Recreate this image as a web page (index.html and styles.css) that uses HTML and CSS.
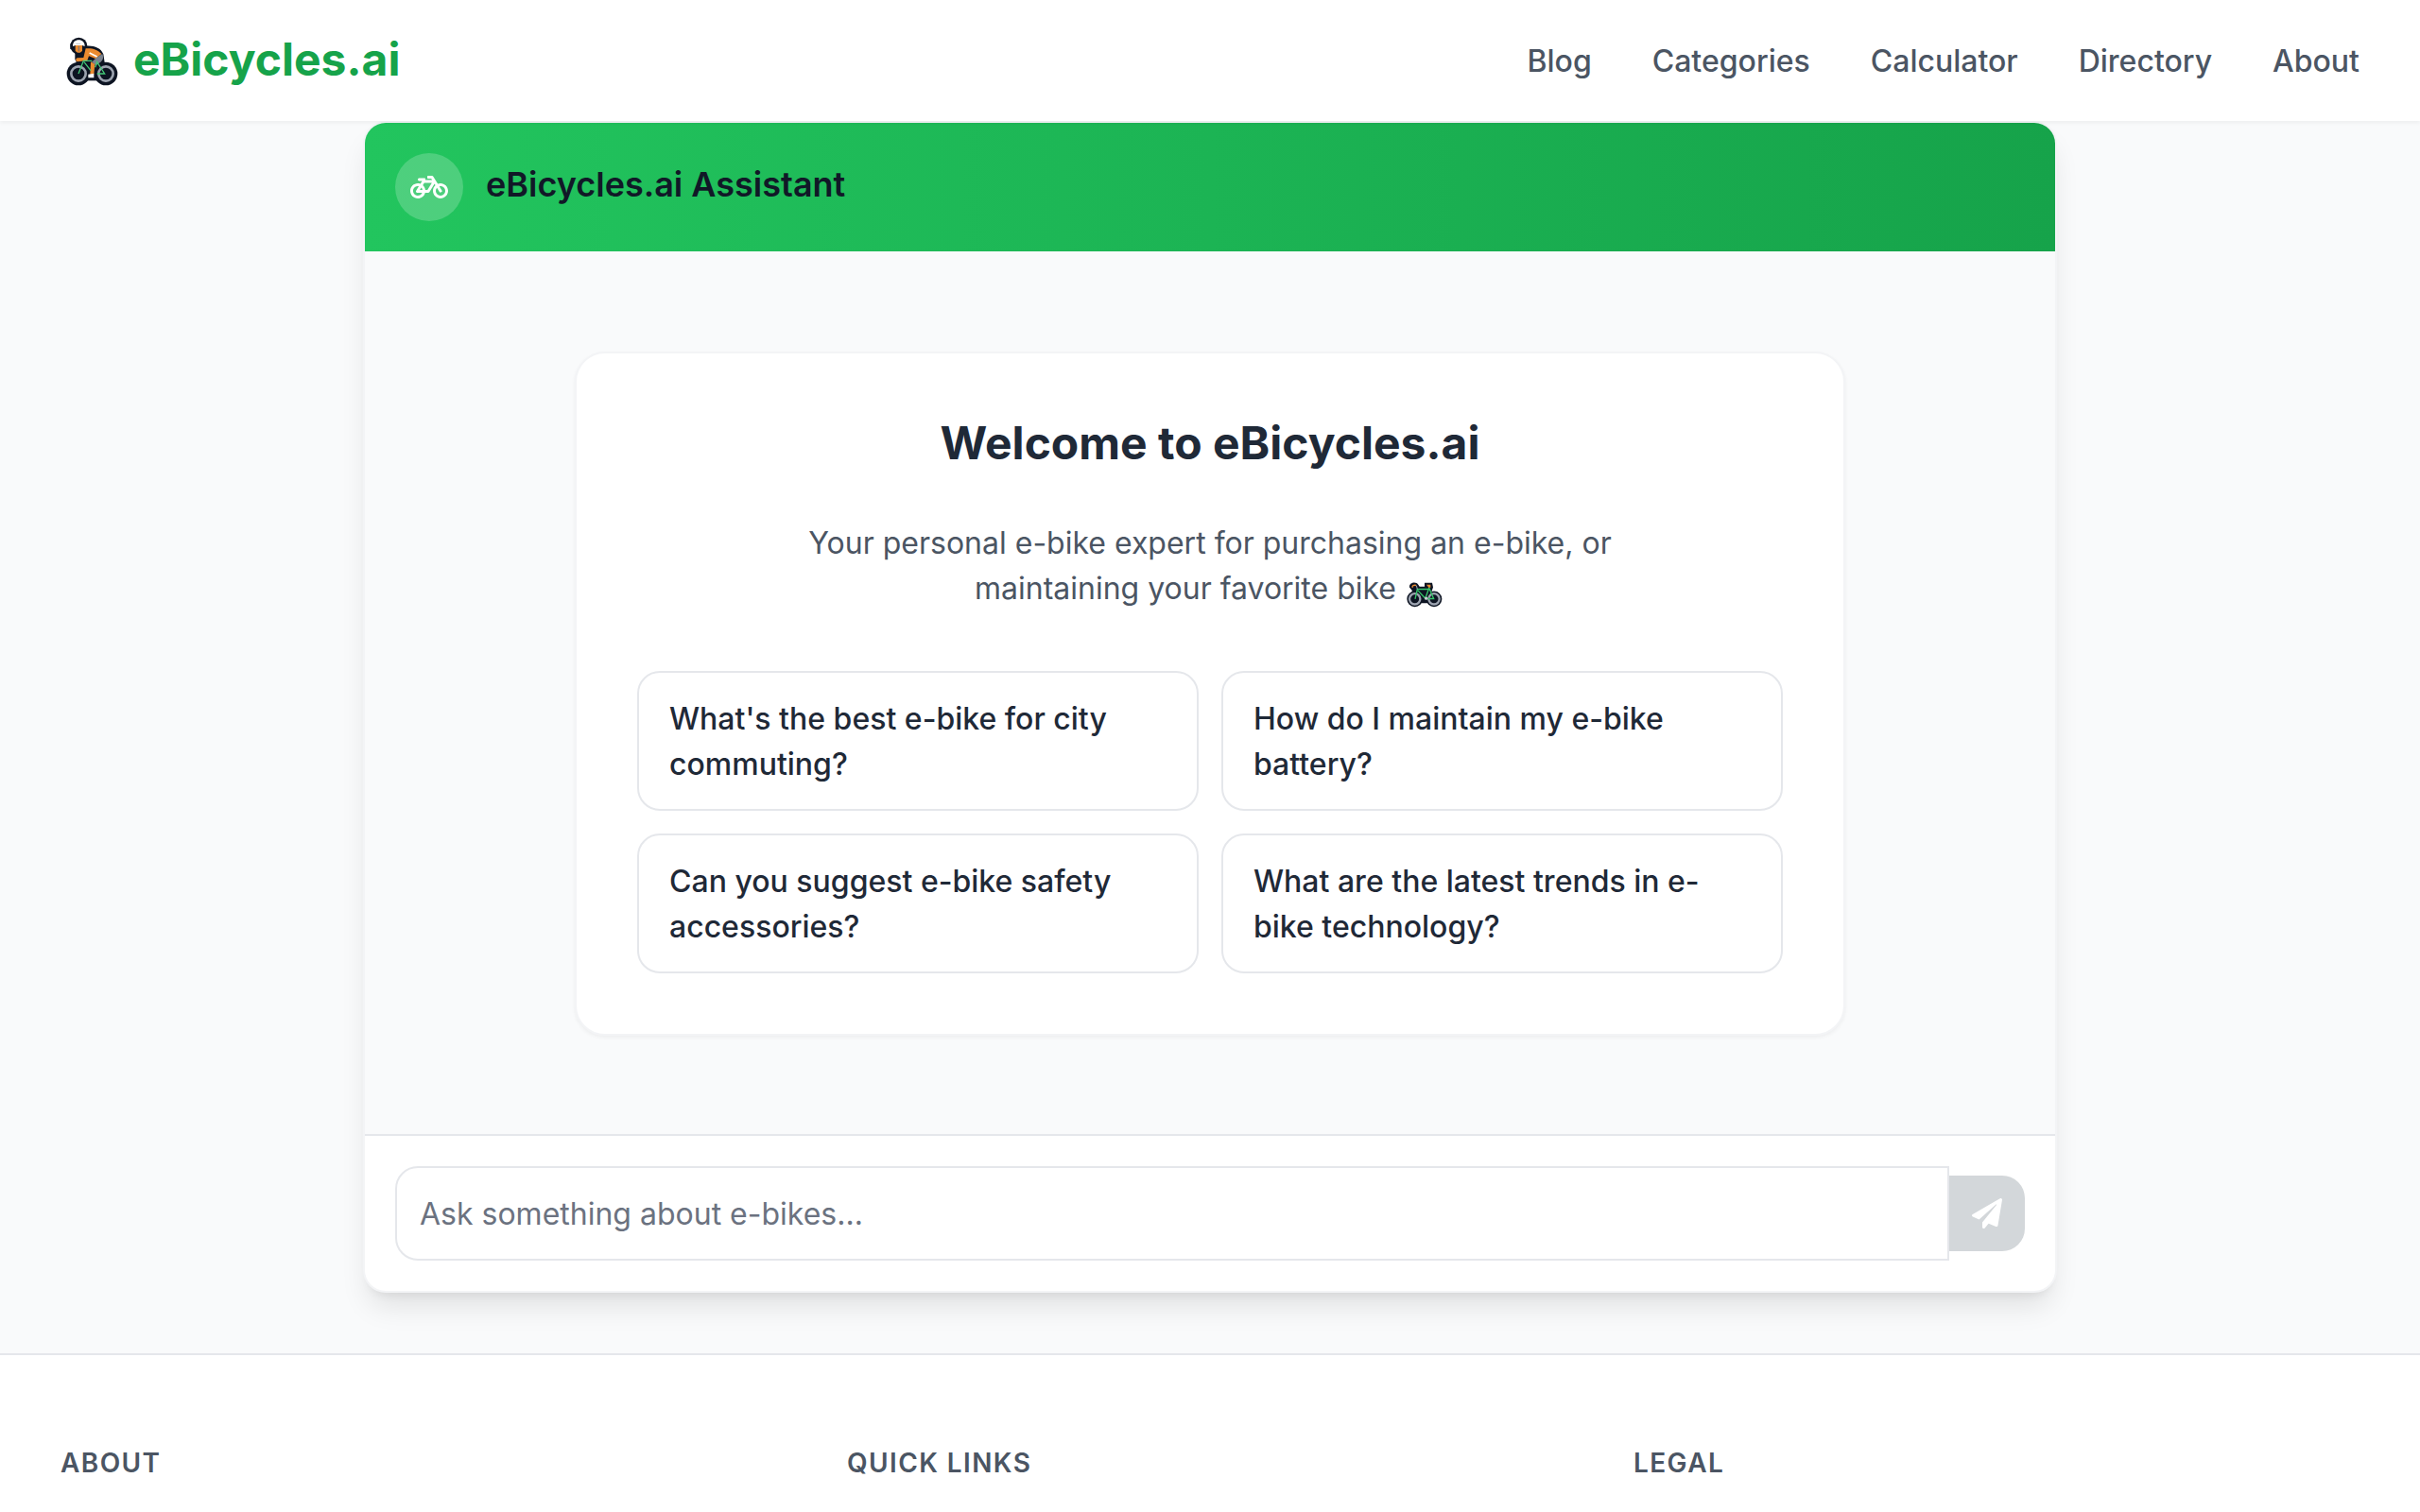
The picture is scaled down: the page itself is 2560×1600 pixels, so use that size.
FILE: index.html
```html
<!doctype html>
<html lang="en">
    <head>
        <meta charset="UTF-8" />
        <meta name="viewport" content="width=device-width, initial-scale=1.0" />
        <title>eBicycles.ai</title>
        <link rel="stylesheet" href="styles.css">
    </head>
    <body>
        <nav class="navbar">
            <a class="logo" href="#">
                <svg class="logo-icon" viewBox="16 13 168 159" aria-hidden="true">
                    <g fill="#0d1422">
                        <circle cx="55" cy="130" r="37" />
                        <circle cx="142" cy="130" r="37" />
                        <circle cx="56" cy="42" r="27" />
                        <path d="M29 34h8v18h-8zM44 62l28-4 8-16c24-2 46 6 54 26l4 26 4 50H90L50 98l-6-14z" />
                        <path d="M66 128h64v24H66z" />
                    </g>
                    <g fill="none" stroke="#9ca3af" stroke-width="8">
                        <circle cx="55" cy="130" r="23" />
                        <circle cx="142" cy="130" r="23" />
                    </g>
                    <path d="M45 40h22v18l-7 5h-8l-7-5z" fill="#ea8a2f" />
                    <path d="M56 42v17" stroke="#6b7280" stroke-width="3" />
                    <path d="M37 43c0-14 8-20 19-20s19 7 19 20l-8-3H45z" fill="#fff" />
                    <path d="M47 35h15" stroke="#c5cad1" stroke-width="3" />
                    <path d="M78 50c20-2 38 3 50 17l-18 16-22-9-5 14-31 4c-7 0-7-12 0-12l19-1z" fill="#ea8a2f" />
                    <path d="M90 64l24 12" stroke="#fff" stroke-width="5" />
                    <path d="M112 79l19-12c5 13 1 21-8 28l-13 9-13-11z" fill="#7b828d" />
                    <path d="M94 92l13 8-3 32H92z" fill="#ea8a2f" />
                    <path d="M86 132l18-3v14H86z" fill="#fff" />
                    <path d="M55 130l16-41h27M73 93l21 27M112 90l26 40h-24m-6-20l6-16" fill="none" stroke="#43c777" stroke-width="4" />
                </svg>
                <span>eBicycles.ai</span>
            </a>
            <div class="nav-links">
                <a href="#">Blog</a>
                <a href="#">Categories</a>
                <a href="#">Calculator</a>
                <a href="#">Directory</a>
                <a href="#">About</a>
            </div>
        </nav>

        <main class="chat-container">
            <div class="chat-header">
                <div class="avatar">
                    <svg class="avatar-icon" viewBox="0 0 640 512" aria-hidden="true">
                        <path fill="currentColor" d="M512.509 192.001c-16.373-.064-32.03 2.955-46.436 8.495l-77.68-125.153A24 24 0 0 0 368.001 64h-64c-8.837 0-16 7.163-16 16v16c0 8.837 7.163 16 16 16h50.649l14.896 24H256.002v-16c0-8.837-7.163-16-16-16h-87.459c-13.441 0-24.777 10.999-24.536 24.437.232 13.044 10.876 23.563 23.995 23.563h48.726l-29.417 47.52c-13.433-4.83-27.904-7.483-42.992-7.52C58.094 191.83.412 249.012.002 319.236-.413 390.279 57.055 448 128.002 448c59.642 0 109.758-40.793 123.967-96h52.033a24 24 0 0 0 20.406-11.367L410.37 201.77l14.938 24.067c-25.455 23.448-41.385 57.081-41.307 94.437.145 68.833 57.899 127.051 126.729 127.719 70.606.685 128.181-55.803 129.255-125.996 1.086-70.941-56.526-129.72-127.476-129.996zM186.75 265.772c9.727 10.529 16.673 23.661 19.642 38.228h-43.306l23.664-38.228zM128.002 400c-44.112 0-80-35.888-80-80s35.888-80 80-80c5.869 0 11.586.653 17.099 1.859l-45.505 73.509C89.715 331.327 101.213 352 120.002 352h81.3c-12.37 28.225-40.562 48-73.3 48zm162.63-96h-35.624c-3.96-31.756-19.556-59.894-42.383-80.026L237.371 184h127.547l-74.286 120zm217.057 95.886c-41.036-2.165-74.049-35.692-75.627-76.755-.812-21.121 6.633-40.518 19.335-55.263l44.433 71.586c4.66 7.508 14.524 9.816 22.032 5.156l13.594-8.437c7.508-4.66 9.817-14.524 5.156-22.032l-44.468-71.643a79.901 79.901 0 0 1 19.858-2.497c44.112 0 80 35.888 80 80-.001 45.54-38.252 82.316-84.313 79.885z" />
                    </svg>
                </div>
                <h1>eBicycles.ai Assistant</h1>
            </div>

            <div class="chat-messages">
                <div class="welcome">
                    <h2>Welcome to eBicycles.ai</h2>
                    <p>
                        Your personal e-bike expert for purchasing an e-bike, or
                        maintaining your favorite bike
                        <svg class="bike" viewBox="84 76 114 80" aria-hidden="true">
                            <g fill="#0d1422">
                                <circle cx="110" cy="129" r="25" />
                                <circle cx="171" cy="129" r="25" />
                                <path d="M93 92c-2-16 22-20 28-8l4 6h16v-12h24l3 14-5 14 8 36h-64l-6-40z" />
                            </g>
                            <g fill="none" stroke="#9ca3af" stroke-width="7">
                                <circle cx="110" cy="129" r="17" />
                                <circle cx="171" cy="129" r="17" />
                            </g>
                            <path d="M111 129l7-31h36m-34 4l24 26h26l-15-34-11 32" fill="none" stroke="#35c46a" stroke-width="4" />
                            <path d="M118 98l-3-12" fill="none" stroke="#9ca3af" stroke-width="3" />
                            <path d="M103 93c-3-6 4-9 11-7" fill="none" stroke="#ea8a2f" stroke-width="4" />
                            <path d="M147 84h13v9h-6z" fill="#ea8a2f" />
                            <circle cx="146" cy="127" r="5" fill="#c5cad1" />
                        </svg>
                    </p>
                    <div class="suggestions">
                        <button class="suggestion">What's the best e-bike for city commuting?</button>
                        <button class="suggestion">How do I maintain my e-bike battery?</button>
                        <button class="suggestion">Can you suggest e-bike safety accessories?</button>
                        <button class="suggestion">What are the latest trends in e-bike technology?</button>
                    </div>
                </div>
            </div>

            <form class="chat-form">
                <input type="text" class="chat-input" placeholder="Ask something about e-bikes..." />
                <button type="submit" class="send-button" disabled aria-label="Send">
                    <svg class="send-icon" viewBox="0 0 512 512" aria-hidden="true">
                        <path fill="currentColor" d="M476 3.2L12.5 270.6c-18.1 10.4-15.8 35.6 2.2 43.2L121 358.4l287.3-253.2c5.5-4.9 13.3 2.6 8.6 8.3L176 407v80.5c0 23.6 28.5 32.9 42.5 15.8L282 426l124.6 52.2c14.2 6 30.4-2.9 33-18.2l72-432C515 7.8 493.3-6.8 476 3.2z" />
                    </svg>
                </button>
            </form>
        </main>

        <footer class="footer">
            <h3>About</h3>
            <h3>Quick Links</h3>
            <h3>Legal</h3>
        </footer>
    </body>
</html>
```
FILE: styles.css
```css
* {
    box-sizing: border-box;
    margin: 0;
    padding: 0;
}
body {
    font-family: Inter, sans-serif;
    font-size: 32px;
    line-height: 48px;
    background: #f9fafb;
    color: #111827;
    height: 1600px;
    overflow: hidden;
}
a {
    color: inherit;
    text-decoration: none;
}
.navbar {
    display: flex;
    justify-content: space-between;
    align-items: center;
    height: 128px;
    padding: 0 64px;
    background: #fff;
    box-shadow: 0 2px 4px rgba(0, 0, 0, 0.05);
    position: relative;
    z-index: 1;
}
.logo {
    display: flex;
    align-items: center;
    gap: 15px;
    padding-left: 6px;
    font-size: 48px;
    font-weight: 700;
    line-height: 64px;
    color: #16a34a;
}
.logo span {
    padding-bottom: 2px;
}
.logo-icon {
    width: 56px;
    height: 53px;
    margin-top: 2px;
}
.nav-links {
    display: flex;
    gap: 64px;
    padding-top: 2px;
    font-weight: 500;
    color: #4b5563;
}
.chat-container {
    display: flex;
    flex-direction: column;
    width: 1792px;
    height: 1240px;
    margin: 0 auto 64px;
    background: #fff;
    border: 2px solid #f3f4f6;
    border-radius: 24px;
    box-shadow:
        0 20px 30px -6px rgba(0, 0, 0, 0.1),
        0 8px 12px -8px rgba(0, 0, 0, 0.1);
    overflow: hidden;
}
.chat-header {
    display: flex;
    align-items: center;
    gap: 24px;
    padding: 32px;
    background: linear-gradient(to right, #22c55e, #16a34a);
}
.avatar {
    display: flex;
    align-items: center;
    justify-content: center;
    width: 72px;
    height: 72px;
    border-radius: 50%;
    background: rgba(255, 255, 255, 0.2);
    color: #fff;
}
.avatar-icon {
    width: 40px;
    height: 32px;
}
.chat-header h1 {
    font-size: 36px;
    font-weight: 600;
    line-height: 56px;
    padding-bottom: 6px;
}
.chat-messages {
    flex: 1;
    display: flex;
    align-items: center;
    justify-content: center;
    padding-top: 2px;
    background: #f9fafb;
}
.welcome {
    width: 1344px;
    padding: 64px;
    background: #fff;
    border: 2px solid #f3f4f6;
    border-radius: 32px;
    box-shadow: 0 2px 4px rgba(0, 0, 0, 0.05);
    text-align: center;
}
.welcome h2 {
    margin-bottom: 51px;
    font-size: 48px;
    font-weight: 700;
    line-height: 62px;
    color: #1f2937;
}
.welcome p {
    max-width: 896px;
    margin: 0 auto 63px;
    color: #4b5563;
}
.bike {
    width: 38px;
    height: 27px;
    margin: 0 3px 0 2px;
    vertical-align: -9px;
}
.suggestions {
    display: grid;
    grid-template-columns: 1fr 1fr;
    gap: 24px;
}
.suggestion {
    padding: 25px 32px 23px;
    background: #fff;
    border: 2px solid #e5e7eb;
    border-radius: 24px;
    font: inherit;
    font-weight: 500;
    color: #1f2937;
    text-align: left;
    cursor: pointer;
}
.chat-form {
    display: flex;
    align-items: center;
    padding: 32px;
    border-top: 2px solid #e5e7eb;
}
.chat-input {
    flex: 1;
    height: 100px;
    padding: 0 24px;
    border: 2px solid #e5e7eb;
    border-radius: 24px 0 0 24px;
    font: inherit;
    outline: none;
}
.chat-input::placeholder {
    color: #6b7280;
}
.send-button {
    display: flex;
    align-items: center;
    justify-content: center;
    width: 80px;
    height: 80px;
    background: #d3d7da;
    border: none;
    border-radius: 0 24px 24px 0;
    color: #fff;
}
.send-icon {
    width: 32px;
    height: 32px;
}
.footer {
    display: grid;
    grid-template-columns: repeat(3, 1fr);
    gap: 64px;
    padding: 94px 64px;
    background: #fff;
    border-top: 2px solid #e5e7eb;
}
.footer h3 {
    font-size: 28px;
    font-weight: 600;
    line-height: 40px;
    letter-spacing: 0.05em;
    text-transform: uppercase;
    color: #4b5563;
}
```
